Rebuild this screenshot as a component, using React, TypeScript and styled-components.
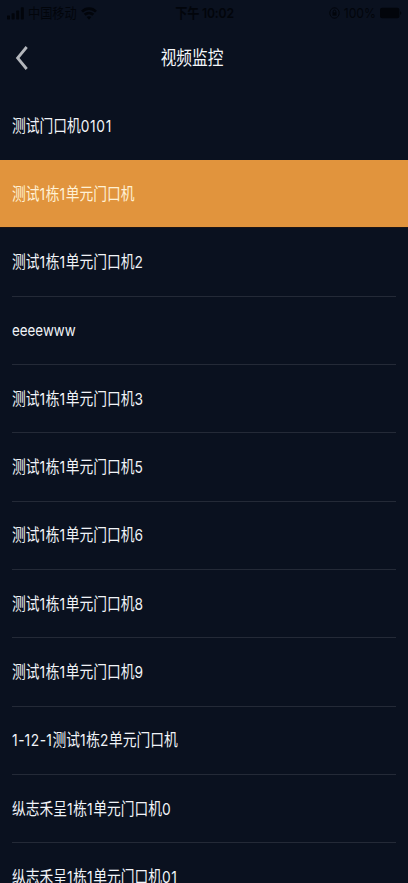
import React from 'react';
import styled, { createGlobalStyle } from 'styled-components';

const GlobalStyle = createGlobalStyle`
  * { box-sizing: border-box; }
  html, body { margin: 0; background: #0a111f; }
  body {
    font-family: Inter, "Noto Sans CJK SC", sans-serif;
    overflow: hidden;
  }
`;

const Screen = styled.div`
  width: 408px;
  height: 883px;
  overflow: hidden;
  background: #0a111f;
  display: flex;
  flex-direction: column;
`;

const StatusBar = styled.div`
  height: 26px;
  flex: none;
  padding: 0 6px 0 7px;
  display: grid;
  grid-template-columns: 1fr auto 1fr;
  align-items: center;
  color: #02050b;
  font-size: 12.2px;
  line-height: 26px;
`;

const StatusGroup = styled.div<{ $end?: boolean }>`
  display: flex;
  align-items: center;
  justify-content: ${p => (p.$end ? 'flex-end' : 'flex-start')};
  gap: 4px;
  svg { display: block; flex: none; }
`;

const StatusText = styled.span<{ $strong?: boolean }>`
  display: inline-block;
  white-space: nowrap;
  font-weight: ${p => (p.$strong ? 600 : 400)};
  letter-spacing: ${p => (p.$strong ? '-0.2px' : 'normal')};
  transform: scaleY(1.13);
`;

const Header = styled.header`
  height: 65.6px;
  flex: none;
  display: grid;
  grid-template-columns: 48px 1fr 72px;
  align-items: center;
`;

const BackButton = styled.button`
  border: 0;
  padding: 0 0 1px 15px;
  background: none;
  svg { display: block; }
`;

const Title = styled.h1`
  margin: 0;
  padding-top: 1px;
  color: #f4f7fa;
  font-size: 15.7px;
  font-weight: 400;
  line-height: 24px;
  text-align: center;
  transform: scaleY(1.2);
`;

const List = styled.ul`
  margin: 0;
  padding: 0;
  list-style: none;
`;

const Row = styled.li<{ $active?: boolean }>`
  height: 68.35px;
  padding: 0 12px;
  background: ${p => (p.$active ? '#e1943d' : 'transparent')};
  border-bottom: ${p => (p.$active ? '1px solid #1c1415' : '0')};
  color: ${p => (p.$active ? '#fff1d5' : '#f1f4f8')};
`;

const RowBody = styled.div<{ $line?: boolean }>`
  height: 100%;
  display: flex;
  align-items: center;
  border-bottom: ${p => (p.$line ? '1px solid #242a37' : '0')};
`;

const Name = styled.span`
  font-size: 13.75px;
  line-height: 20px;
  white-space: nowrap;
  transform: scaleY(1.2);
`;

const Digits = styled.span`
  letter-spacing: 0.65px;
`;

const Latin = styled.span`
  font-size: 13.35px;
`;

const DeviceName = ({ text }: { text: string }) => (
  <Name>
    {text.split(/([0-9]+|[a-z]+)/).map((run, i) => {
      if (/^[0-9]/.test(run)) return <Digits key={i}>{run}</Digits>;
      if (/^[a-z]/.test(run)) return <Latin key={i}>{run}</Latin>;
      return run;
    })}
  </Name>
);

const devices = [
  '测试门口机0101',
  '测试1栋1单元门口机',
  '测试1栋1单元门口机2',
  'eeeewww',
  '测试1栋1单元门口机3',
  '测试1栋1单元门口机5',
  '测试1栋1单元门口机6',
  '测试1栋1单元门口机8',
  '测试1栋1单元门口机9',
  '1-12-1测试1栋2单元门口机',
  '纵志禾呈1栋1单元门口机0',
  '纵志禾呈1栋1单元门口机01',
];
const activeIndex = 1;

const SignalIcon = () => (
  <svg width="17" height="13" viewBox="0 0 17 13" fill="currentColor">
    <rect x="0" y="8.5" width="3" height="4" rx="0.7" />
    <rect x="4.6" y="6.3" width="3" height="6.2" rx="0.7" />
    <rect x="9.2" y="3.5" width="3" height="9" rx="0.7" />
    <rect x="13.8" y="0.3" width="3" height="12.2" rx="0.7" />
  </svg>
);

const WifiIcon = () => (
  <svg width="16" height="13" viewBox="0 0 16 13" fill="none" stroke="currentColor" strokeWidth="2.7">
    <path d="M1 4.6C5 .6 11 .6 15 4.6" />
    <path d="M3.7 7.8c2.5-2.4 6.1-2.4 8.6 0" />
    <path d="M5.7 10 8 12.8 10.3 10C9 8.9 7 8.9 5.7 10Z" fill="currentColor" stroke="none" />
  </svg>
);

const LockIcon = () => (
  <svg width="11" height="12" viewBox="0 0 11 12" fill="none" stroke="currentColor">
    <ellipse cx="5.5" cy="6" rx="4.7" ry="5.2" />
    <rect x="3.5" y="5.4" width="4" height="3.2" fill="currentColor" stroke="none" />
    <path d="M4.2 5.5V4.3c0-1.7 2.6-1.7 2.6 0v1.2" />
  </svg>
);

const BatteryIcon = () => (
  <svg width="22" height="12" viewBox="0 0 22 12" fill="currentColor">
    <rect x="0" y="0.8" width="19.4" height="10.4" rx="2" />
    <path d="M20.2 4.2c1.5.5 1.5 3.1 0 3.6Z" />
  </svg>
);

export default function App() {
  return (
    <>
      <GlobalStyle />
      <Screen>
        <StatusBar>
          <StatusGroup>
            <SignalIcon />
            <StatusText>中国移动</StatusText>
            <WifiIcon />
          </StatusGroup>
          <StatusText $strong>下午 10:02</StatusText>
          <StatusGroup $end>
            <LockIcon />
            <StatusText>100%</StatusText>
            <BatteryIcon />
          </StatusGroup>
        </StatusBar>
        <Header>
          <BackButton aria-label="返回">
            <svg width="14" height="26" viewBox="0 0 14 26" fill="none" stroke="#b4b7bc" strokeWidth="2.8">
              <path d="M11.7 2 2.6 13l9.1 11" />
            </svg>
          </BackButton>
          <Title>视频监控</Title>
        </Header>
        <List>
          {devices.map((name, i) => (
            <Row key={name} $active={i === activeIndex}>
              <RowBody $line={i > activeIndex}>
                <DeviceName text={name} />
              </RowBody>
            </Row>
          ))}
        </List>
      </Screen>
    </>
  );
}
